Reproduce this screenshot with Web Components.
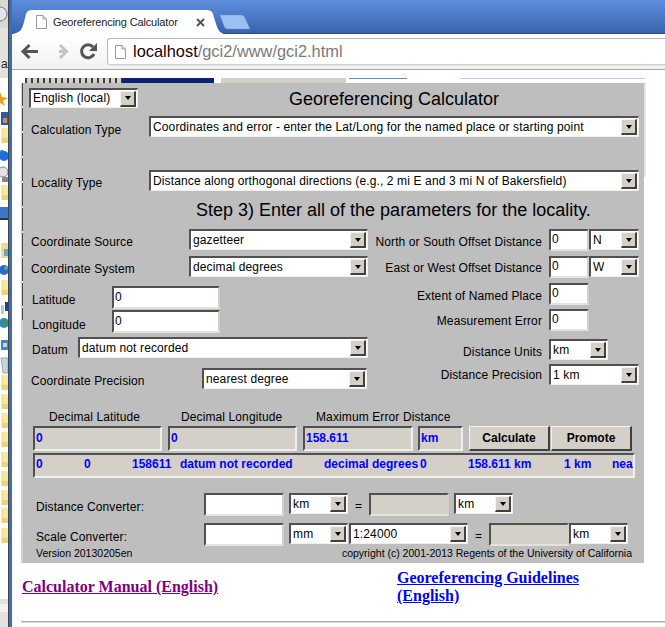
<!DOCTYPE html>
<html><head><meta charset="utf-8">
<style>
html,body{margin:0;padding:0;width:665px;height:627px;overflow:hidden;background:#fff}
body{font-family:"Liberation Sans",Arial,sans-serif}
</style></head>
<body>
<gc-desktop></gc-desktop>
<script>
function def(name,css,html){
  const C=class extends HTMLElement{
    constructor(){super();const r=this.attachShadow({mode:'open'});
      r.innerHTML='<style>'+css+'</style>'+html;}
  };
  customElements.define(name,C);
}
const font='font-family:"Liberation Sans",Arial,sans-serif;';
def('gc-select',`
:host{display:block;box-sizing:border-box;height:21px;background:#fff;border-top:2px solid #505050;border-left:2px solid #505050;border-right:1px solid #f0efe9;border-bottom:1px solid #f0efe9;${font}font-size:12px;color:#000;flex:none}
.w{display:flex;height:100%;align-items:center;justify-content:space-between}
.t{padding-left:2px;white-space:nowrap;overflow:hidden;line-height:16px;margin-top:-1px;letter-spacing:.13px}
.b{box-sizing:border-box;flex:none;width:16px;height:16px;margin-right:1px;background:#d4d0c8;border:1px solid;border-width:1px 2px 2px 1px;border-color:#f4f3ee #404040 #404040 #f4f3ee;display:flex;align-items:center;justify-content:center}
.a{width:0;height:0;border:3.5px solid transparent;border-top:4px solid #000;border-bottom:0}
`,`<div class="w"><span class="t"><slot></slot></span><span class="b"><span class="a"></span></span></div>`);
def('gc-input',`
:host{display:block;box-sizing:border-box;height:23px;background:#fff;border:2px solid;border-color:#505050 #d4d0c8 #e4e2dc #505050;${font}font-size:12px;color:#002;padding:1px 0 0 1px;line-height:15px;flex:none}
:host([off]){background:#d4d0c8}
`,`<slot></slot>`);
def('gc-output',`
:host{display:block;box-sizing:border-box;height:25px;background:#d4d0c8;border:2px solid;border-color:#505050 #f0efe9 #f0efe9 #505050;${font}font-size:12px;font-weight:700;color:#00f;padding:2px 0 0 1px;line-height:16px;white-space:nowrap;overflow:hidden;flex:none}
`,`<slot></slot>`);
def('gc-button',`
:host{display:flex;align-items:center;justify-content:center;box-sizing:border-box;height:25px;width:81px;background:#d4d0c8;border:1px solid;border-color:#f4f3ee #404040 #404040 #f4f3ee;border-width:1px 2px 2px 1px;${font}font-size:12px;font-weight:700;color:#000;flex:none}
`,`<slot></slot>`);
def('gc-label',`
:host{display:block;box-sizing:border-box;${font}font-size:12px;color:#000;line-height:14px;white-space:nowrap;flex:none;padding-top:3px;letter-spacing:.11px}
:host([right]){text-align:right}
`,`<slot></slot>`);

def('gc-panel',`
:host{display:block;box-sizing:border-box;position:relative;width:623px;height:480px;background:#bebebe;border-left:2px solid #d4d0c8;${font}overflow:hidden}
.row{display:flex;align-items:center}
.r1{margin-top:5px;margin-left:6px;height:20px;align-items:flex-start}
.title{margin-left:151px;font-size:18px;line-height:20px;white-space:nowrap;color:#000;padding-top:1px}
.r2{margin-top:8px;margin-left:8px}
.r3{margin-top:33px;margin-left:8px}
.r2 gc-label{width:118px;padding-top:6px}
.r3 gc-label{width:118px;padding-top:5px}
.step{margin:9px 0 0 173px;font-size:18px;line-height:20px;white-space:nowrap}
.cols{display:flex;margin-top:9px;height:160px}
.lc{width:345px;flex:none}
.lc .row{margin-left:8px}
.src{height:21px}.sys{height:21px;margin-top:6px}
.lat{height:23px;margin-top:9px}.lon{height:23px;margin-top:1px}
.dat{height:21px;margin-top:4px}.pre{height:21px;margin-top:10px}
.rc .row{height:22px;align-items:flex-start}
.rc gc-label{width:174px;margin-right:7px;padding-top:5px}
.rc .row:nth-child(n+2){margin-top:5px}
.rc .row:nth-child(4){margin-top:4px}
.rc .row:nth-child(5){margin-top:8px;height:21px}
.rc .row:nth-child(6){margin-top:4px;height:21px}
.rc .row:nth-child(1) gc-label,.rc .row:nth-child(3) gc-label,.rc .row:nth-child(5) gc-label{padding-top:6px}
.rc .row:nth-child(6) gc-label{padding-top:4px}
.heads{display:flex;margin:20px 0 0 26px;height:14px}
.heads gc-label{padding:1px 0 0}
.boxes{display:flex;margin:3px 0 0 10px}
.wide{margin:2px 0 0 10px;width:602px;display:flex;padding-top:1px}
.wide span{width:48px;flex:none;white-space:nowrap}
.conv{margin:15px 0 0 13px;align-items:flex-start}
.conv2{margin-top:7px}
.conv gc-label{width:168px;padding-top:7px}
.eq{font-size:12px;flex:none;text-align:center;line-height:14px;padding-top:6px}
.foot{display:flex;justify-content:space-between;margin:1px 12px 0 13px;font-size:10.5px;line-height:12px;height:12px;white-space:nowrap}
`,`<div class="row r1"><gc-select style="width:109px;height:20px">English (local)</gc-select><div class="title">Georeferencing Calculator</div></div>
<div class="row r2"><gc-label>Calculation Type</gc-label><gc-select style="width:490px">Coordinates and error - enter the Lat/Long for the named place or starting point</gc-select></div>
<div class="row r3"><gc-label>Locality Type</gc-label><gc-select style="width:490px">Distance along orthogonal directions (e.g., 2 mi E and 3 mi N of Bakersfield)</gc-select></div>
<div class="step">Step 3) Enter all of the parameters for the locality.</div>
<div class="cols">
 <div class="lc">
  <div class="row src"><gc-label style="width:158px;padding-top:5px">Coordinate Source</gc-label><gc-select style="width:179px">gazetteer</gc-select></div>
  <div class="row sys"><gc-label style="width:158px;padding-top:5px">Coordinate System</gc-label><gc-select style="width:179px">decimal degrees</gc-select></div>
  <div class="row lat"><gc-label style="width:81px;padding-left:1px;padding-top:4px">Latitude</gc-label><gc-input style="width:108px;padding-top:2px">0</gc-input></div>
  <div class="row lon"><gc-label style="width:81px;padding-left:1px;padding-top:6px">Longitude</gc-label><gc-input style="width:108px;padding-top:2px">0</gc-input></div>
  <div class="row dat"><gc-label style="width:47px;padding-left:1px;padding-top:4px">Datum</gc-label><gc-select style="width:290px">datum not recorded</gc-select></div>
  <div class="row pre"><gc-label style="width:171px;padding-top:4px">Coordinate Precision</gc-label><gc-select style="width:165px">nearest degree</gc-select></div>
 </div>
 <div class="rc">
  <div class="row"><gc-label right>North or South Offset Distance</gc-label><gc-input style="width:40px;height:22px">0</gc-input><gc-select style="width:50px">N</gc-select></div>
  <div class="row"><gc-label right>East or West Offset Distance</gc-label><gc-input style="width:40px;height:22px">0</gc-input><gc-select style="width:50px">W</gc-select></div>
  <div class="row"><gc-label right>Extent of Named Place</gc-label><gc-input style="width:40px;height:22px">0</gc-input></div>
  <div class="row"><gc-label right>Measurement Error</gc-label><gc-input style="width:40px;height:22px">0</gc-input></div>
  <div class="row"><gc-label right>Distance Units</gc-label><gc-select style="width:59px">km</gc-select></div>
  <div class="row"><gc-label right>Distance Precision</gc-label><gc-select style="width:90px">1 km</gc-select></div>
 </div>
</div>
<div class="heads"><gc-label style="width:132px">Decimal Latitude</gc-label><gc-label style="width:135px">Decimal Longitude</gc-label><gc-label>Maximum Error Distance</gc-label></div>
<div class="boxes">
 <gc-output style="width:129px">0</gc-output><gc-output style="width:129px;margin-left:6px">0</gc-output><gc-output style="width:110px;margin-left:6px">158.611</gc-output><gc-output style="width:45px;margin-left:5px">km</gc-output>
 <gc-button style="margin-left:6px">Calculate</gc-button><gc-button style="margin-left:1px">Promote</gc-button>
</div>
<gc-output class="wide"><span>0</span><span>0</span><span>158611</span><span style="width:144px">datum not recorded</span><span style="width:96px">decimal degrees</span><span>0</span><span style="width:96px">158.611 km</span><span>1 km</span><span>nea</span></gc-output>
<div class="row conv"><gc-label>Distance Converter:</gc-label><gc-input style="width:80px"></gc-input><gc-select style="width:59px;margin-left:5px">km</gc-select><div class="eq" style="width:21px">=</div><gc-input off style="width:80px"></gc-input><gc-select style="width:59px;margin-left:5px">km</gc-select></div>
<div class="row conv conv2"><gc-label>Scale Converter:</gc-label><gc-input style="width:80px"></gc-input><gc-select style="width:59px;margin-left:5px">mm</gc-select><gc-select style="width:119px;margin-left:1px">1:24000</gc-select><div class="eq" style="width:21px">=</div><gc-input off style="width:80px"></gc-input><gc-select style="width:59px">km</gc-select></div>
<div class="foot"><span>Version 20130205en</span><span>copyright (c) 2001-2013 Regents of the University of California</span></div>
`);

def('gc-page',`
:host{display:block;position:relative;flex:1;min-width:0;background:#fff;box-sizing:border-box;padding:8px 0 0 9px;height:557px;overflow:hidden}
.strip{display:flex;height:5px;margin-left:4px}
.strip i{display:block;flex:none;height:100%}
.edge{position:absolute;left:9px;top:13px;width:1px;height:237px;background:repeating-linear-gradient(to bottom,#484848 0 23px,#e8e8e8 23px 25px);margin-left:1px}
.glow{position:absolute;left:632px;top:13px;width:2px;height:94px;background:#dbe6f7}
.links{display:flex;font-family:"Liberation Serif","Times New Roman",serif;font-weight:700;font-size:16px;line-height:18px}
a{color:#00f;text-decoration:underline;display:block}
.l1{color:#800080;margin:15px 0 0 1px;width:375px;flex:none}
.l2{margin-top:6px;width:200px;flex:none}
hr{margin:16px 0 0 0;border:0;height:1px;background:#aaa;border-bottom:1px solid #ddd;box-sizing:content-box}
`,`<div class="strip">
 <i style="width:97px;background:repeating-linear-gradient(to right,#3c3c3c 0 2px,#d4d0c8 2px 6px)"></i>
 <i style="width:92px;background:#0a2472"></i>
 <i style="width:7px;background:#fff"></i>
 <i style="width:125px;background:#d4d0c8"></i>
 <i style="width:3px"></i>
 <i style="width:58px;height:1px;background:#5f8fd8"></i>
 <i style="width:53px"></i>
 <i style="width:185px;height:1px;background:#b9cdee"></i>
</div>
<gc-panel></gc-panel>
<div class="edge"></div><div class="glow"></div>
<div class="links"><a class="l1" href="#m">Calculator Manual (English)</a><a class="l2" href="#g">Georeferencing Guidelines (English)</a></div>
<hr>`);

def('gc-chrome',`
:host{display:block;flex:none;${font}}
.tabs{position:relative;height:34px;box-sizing:border-box;background:linear-gradient(#5e8fdd,#3a62ad);border-bottom:1px solid #2b4c8c;}
.tabs svg{position:absolute;left:0;top:0}
.tabc{position:absolute;left:24px;top:10px;height:24px;display:flex;align-items:center;gap:6px}
.tabc span{font-size:11px;color:#222;white-space:nowrap;width:137px;letter-spacing:-.15px}
.bar{background:linear-gradient(#fff,#f2f2f2);box-sizing:border-box;display:flex;align-items:flex-start;border-bottom:1px solid #a8a8a8;height:36px}
.btns{width:95px;flex:none;height:35px}
.omni{flex:1;height:27px;margin-top:4px;box-sizing:border-box;background:#fff;border:1px solid #b8b8b8;border-right:0;border-bottom-color:#d0d0d0;border-radius:3px 0 0 3px;display:flex;align-items:center;padding-left:7px;gap:7px;box-shadow:0 1px 0 #e6e6e6}
.url{font-size:16.4px;color:#7a7a7a;white-space:nowrap}
.url b{font-weight:400;color:#200}
`,`<div class="tabs">
 <svg width="260" height="34"><path d="M208 15H229Q232 15 233 18L238 29H216Q213 29 212 26Z" fill="#9dc0f2" stroke="#6f95d2" stroke-width=".5"/>
 <path d="M0 34C8 33 10 30 12 22L14 14C15 11 17 10 20 10L195 10C198 10 200 11 201 14L204 24C206 30 208 33 212 34Z" fill="#fff"/></svg>
 <div class="tabc"><svg style="position:static" width="11" height="14" viewBox="0 0 11 14"><path d="M.5.5H7L10.5 4V13.5H.5Z M7 .5V4H10.5" fill="#fff" stroke="#999"/></svg><span>Georeferencing Calculator</span>
 <svg style="position:static" width="9" height="9" viewBox="0 0 9 9"><path d="M1 1L8 8M8 1L1 8" stroke="#555" stroke-width="2"/></svg></div>
</div>
<div class="bar">
 <svg class="btns" viewBox="0 0 95 35"><path d="M26 17.500H11M17.500 11L11 17.500L17.500 24" fill="none" stroke="#555" stroke-width="3"/>
 <path d="M41 11L47.500 17.500L41 24M47.500 17.500H40" transform="translate(7,0)" fill="none" stroke="#c4c4c4" stroke-width="3"/>
 <path d="M82 20A6.500 6.500 0 1 1 81 13" fill="none" stroke="#555" stroke-width="3"/><path d="M85 9V17H77Z" fill="#555"/></svg>
 <div class="omni"><svg width="11" height="14" viewBox="0 0 11 14"><path d="M.5.5H7L10.500 4V13.500H.5Z M7 .5V4H10.500" fill="#fff" stroke="#999"/></svg><span class="url"><b>localhost</b>/gci2/www/gci2.html</span></div>
</div>`);

def('gc-window',`
:host{display:flex;flex-direction:column;flex:none;width:653px;height:627px;overflow:hidden;background:#fff}
`,`<gc-chrome></gc-chrome><gc-page></gc-page>`);

const folder=y=>`<path d="M2 ${y}H6Q8 ${y} 8 ${y+2}V${y+15}H2Z" fill="#f6e89c"/><path d="M2 ${y+10}H8V${y+15}H2Z" fill="#ecd477"/><path d="M2 ${y}V${y+15}" stroke="#d8c274" stroke-width=".6"/>`;
let ic='';
[128,185,280,375,394,413,432,452,471,490,508,528].forEach(y=>ic+=folder(y));
def('gc-desktop',`
:host{display:flex;width:665px;height:627px;overflow:hidden;${font}}
.side{flex:none;width:8px;height:627px;display:block;background:#fff}
.frame{flex:none;width:4px;box-sizing:border-box;border-left:1px solid #444;background:#3a6cb8}
`,`<svg class="side" viewBox="0 0 8 627">
<rect width="8" height="28" fill="#d8d8d4"/><circle cx="0" cy="14" r="7" fill="#dfe6ee" stroke="#777"/>
<rect y="28" width="8" height="50" fill="#e4e2de"/>
<text x="1" y="68" font-size="12" font-family="Liberation Sans" fill="#222">a</text>
<path d="M0 92L2 97L8 98L3 101L5 106L0 103Z" fill="#f2a020"/>
<rect x="1" y="112" width="7" height="13" fill="#2a5aa8"/><rect x="3" y="118" width="4" height="5" fill="#d84"/>
${ic}
<circle cx="4" cy="156" r="5" fill="#1c6fd8"/><circle cx="2" cy="152" r="2" fill="#1c6fd8"/>
<circle cx="3" cy="172" r="5" fill="#e4e4e4" stroke="#888"/><rect x="2" y="177" width="6" height="5" fill="#888"/>
<rect y="207" width="8" height="11" fill="#3a78c8"/><rect y="218" width="8" height="2" fill="#333"/>
<rect x="1" y="243" width="7" height="15" fill="#f0dc90"/><rect x="4" y="249" width="4" height="7" fill="#6ab"/>
<circle cx="4" cy="270" r="5" fill="#2a6ac8"/><circle cx="6" cy="268" r="2" fill="#5a9"/>
<rect x="1" y="305" width="3" height="9" fill="#bcc"/><rect x="5" y="302" width="3" height="9" fill="#1c3fa0"/>
<circle cx="4" cy="323" r="5" fill="#2a8ad8"/><path d="M1 321L6 319L7 324L3 327Z" fill="#3b9a4a"/>
<rect x="1" y="340" width="7" height="10" fill="#3a88d0"/><rect x="3" y="343" width="4" height="4" fill="#eca"/>
<path d="M1 358H8V373H3Z" fill="#c8d4de" stroke="#9ab"/>
<rect y="599" width="8" height="28" fill="#e4e2de"/><rect y="604" width="8" height="8" fill="#f1f1ef"/>
</svg><div class="frame"></div><gc-window></gc-window>`);
</script>
</body></html>
